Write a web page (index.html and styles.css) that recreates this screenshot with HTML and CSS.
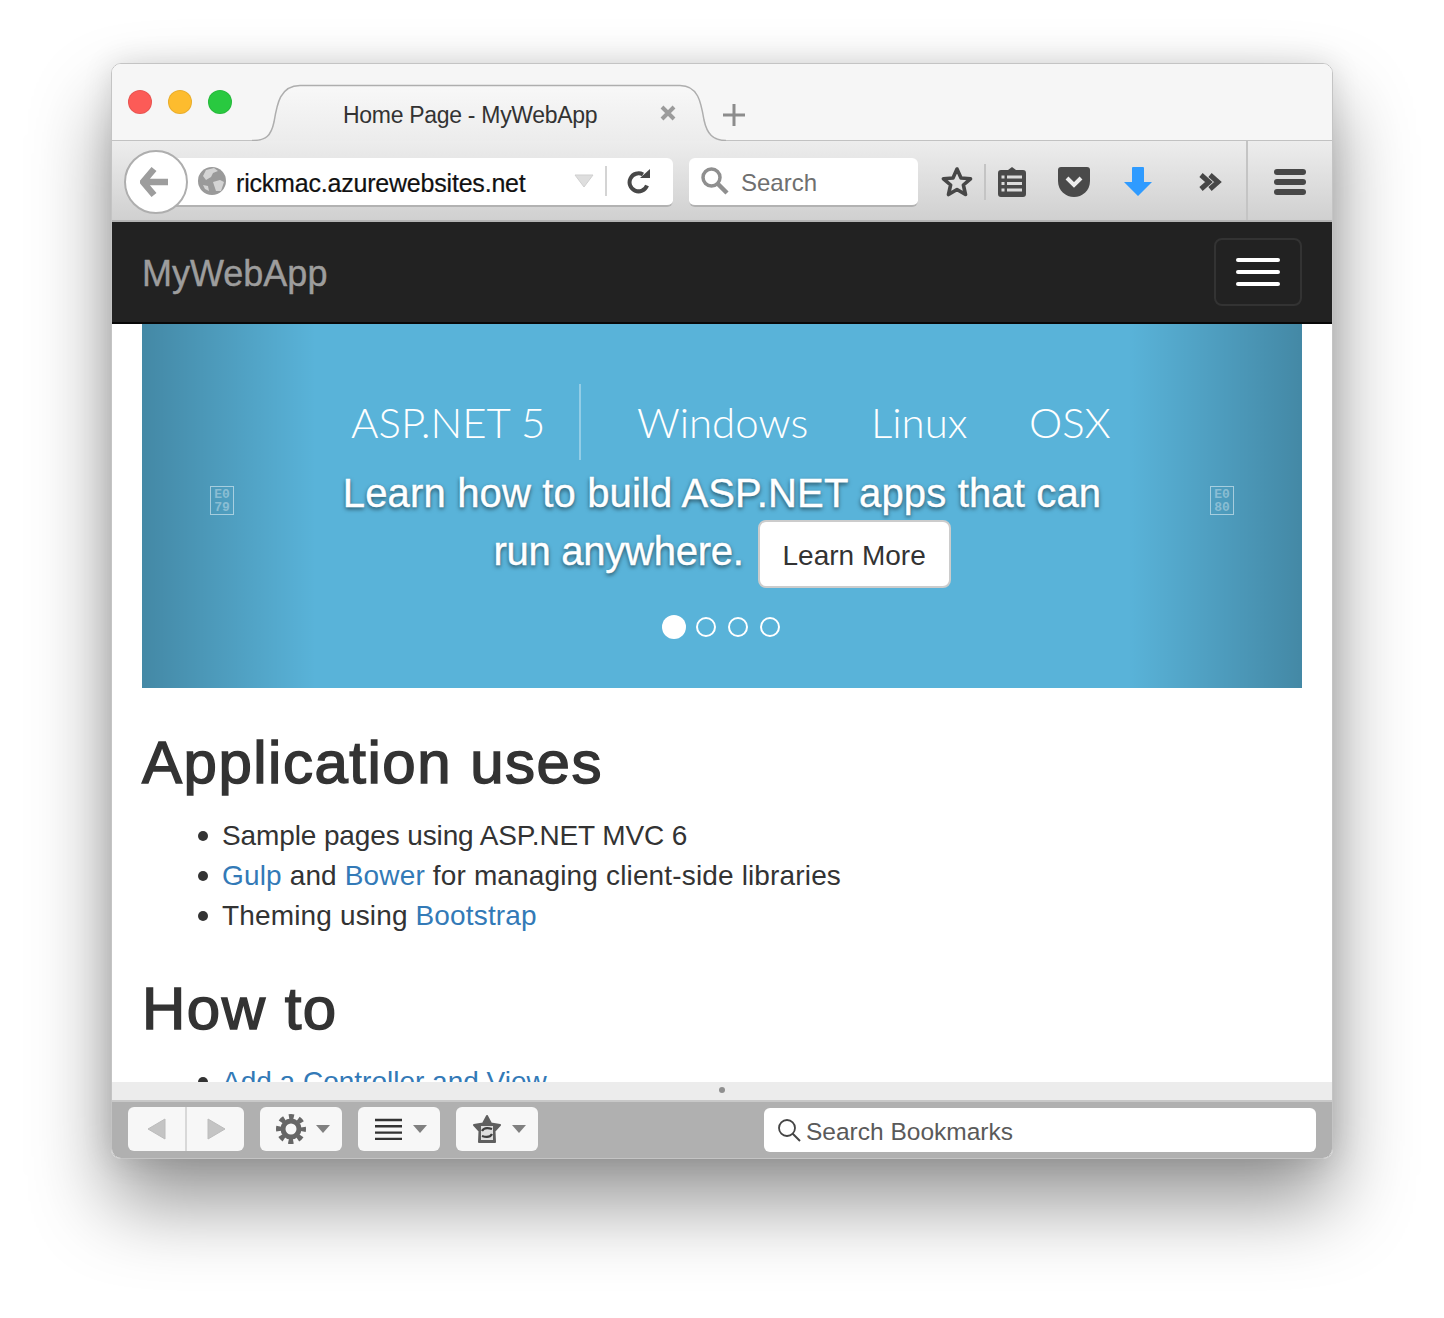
FILE: index.html
```html
<!DOCTYPE html>
<html lang="en">
<head>
    <meta charset="UTF-8">
    <title>Home Page - MyWebApp</title>
    <link rel="stylesheet" href="styles.css">
</head>
<body>
    <div class="window">
        <!-- title bar -->
        <div class="tabbar">
            <span class="light red"></span>
            <span class="light yellow"></span>
            <span class="light green"></span>
            <div class="tab">
                <svg class="tab-shape" width="474" height="57" viewBox="0 0 474 57">
                    <defs>
                        <linearGradient id="tabfill" x1="0" y1="0" x2="0" y2="1">
                            <stop offset="0" stop-color="#f8f8f8"/>
                            <stop offset="1" stop-color="#ececec"/>
                        </linearGradient>
                    </defs>
                    <path d="M0 56.5C14 56.5 19 52 22 38C25 20 28 1.5 48 1.5L428 1.5C446 1.5 449 18 452 36C455 50 461 56.5 474 56.5L474 57L0 57Z" fill="url(#tabfill)"/>
                    <path d="M0 56.5C14 56.5 19 52 22 38C25 20 28 1.5 48 1.5L428 1.5C446 1.5 449 18 452 36C455 50 461 56.5 474 56.5" fill="none" stroke="#aeaeae" stroke-width="1.5"/>
                </svg>
                <span class="tab-title">Home Page - MyWebApp</span>
                <svg class="tab-close" width="16" height="16" viewBox="0 0 16 16">
                    <path d="M2 2L14 14M14 2L2 14" stroke="#9b9b9b" stroke-width="4"/>
                </svg>
            </div>
            <svg class="new-tab" width="22" height="22" viewBox="0 0 22 22">
                <path d="M11 0V22M0 11H22" stroke="#8c8c8c" stroke-width="3"/>
            </svg>
        </div>

        <!-- browser toolbar -->
        <div class="toolbar">
            <div class="back">
                <svg width="30" height="32" viewBox="0 0 30 32">
                    <path d="M14 3L3 16L14 29M4 16H28" fill="none" stroke="#9d9d9d" stroke-width="6.5" stroke-linejoin="round"/>
                </svg>
            </div>
            <div class="urlbar">
                <svg class="globe" width="28" height="28" viewBox="0 0 28 28">
                    <circle cx="14" cy="14" r="14" fill="#9a9a9a"/>
                    <path d="M8 3L16 1L20 4L15 6L13 10L8 13L5 9ZM15 15L22 13L26 15L23 24L18 24ZM5 18L10 19L11 24L7 22Z" fill="#d4d4d4"/>
                </svg>
                <span class="url">rickmac.azurewebsites.net</span>
                <svg class="dropmarker" width="20" height="14" viewBox="0 0 20 14">
                    <path d="M1 1H19L10 13Z" fill="#dedede" stroke="#cfcfcf"/>
                </svg>
                <span class="url-sep"></span>
                <svg class="reload" width="26" height="26" viewBox="0 0 26 26">
                    <path d="M21 17.5A9 9 0 1 1 17 6.5" fill="none" stroke="#484848" stroke-width="4"/>
                    <path d="M14 10L24 10L24 1Z" fill="#484848"/>
                </svg>
            </div>
            <div class="searchbar">
                <svg width="28" height="28" viewBox="0 0 28 28">
                    <circle cx="10.5" cy="10.5" r="8.5" fill="none" stroke="#8f8f8f" stroke-width="3.5"/>
                    <path d="M16.5 16.5L26 26" stroke="#8f8f8f" stroke-width="4.5"/>
                </svg>
                <span class="search-label">Search</span>
            </div>
            <svg class="tool star" width="32" height="32" viewBox="0 0 32 32">
                <polygon points="16,3 20,12 29.5,12.8 22.4,19 24.5,28.5 16,23.5 7.5,28.5 9.6,19 2.5,12.8 12,12" fill="none" stroke="#474747" stroke-width="3.6" stroke-linejoin="round"/>
            </svg>
            <span class="tool-sep"></span>
            <svg class="tool clip" width="28" height="31" viewBox="0 0 28 31">
                <path d="M14 0L18 3H25A3 3 0 0 1 28 6V27A3 3 0 0 1 25 30H3A3 3 0 0 1 0 27V6A3 3 0 0 1 3 3H10Z" fill="#4a4a4a"/>
                <path d="M9 10H24M9 16.5H24M9 23H24" stroke="#dcdcdc" stroke-width="3"/>
                <path d="M3.5 10H6.5M3.5 16.5H6.5M3.5 23H6.5" stroke="#dcdcdc" stroke-width="3"/>
            </svg>
            <svg class="tool pocket" width="32" height="30" viewBox="0 0 32 30">
                <path d="M3 0H29A3 3 0 0 1 32 3V14C32 24 24 30 16 30S0 24 0 14V3A3 3 0 0 1 3 0Z" fill="#4a4a4a"/>
                <path d="M9 11L16 18L23 11" fill="none" stroke="#ececec" stroke-width="4"/>
            </svg>
            <svg class="tool arrow" width="30" height="30" viewBox="0 0 30 30">
                <path d="M9 1A1 1 0 0 1 10 0H20A1 1 0 0 1 21 1V15H29L15 29L1 15H9Z" fill="#2f9bff"/>
            </svg>
            <svg class="tool more" width="24" height="18" viewBox="0 0 24 18">
                <path d="M3 2L11 9L3 16M12 2L20 9L12 16" fill="none" stroke="#474747" stroke-width="5"/>
            </svg>
            <span class="tool-sep tall"></span>
            <div class="tool menu">
                <span></span>
                <span></span>
                <span></span>
            </div>
        </div>

        <!-- site navbar -->
        <div class="navbar">
            <a class="brand">MyWebApp</a>
            <div class="toggle">
                <span></span>
                <span></span>
                <span></span>
            </div>
        </div>

        <div class="page">
            <div class="carousel">
                <div class="control left"><div class="tofu">E0<br>79</div></div>
                <div class="control right"><div class="tofu">E0<br>80</div></div>
                <div class="banner">
                    <span class="b-main">ASP.NET 5</span>
                    <span class="b-line"></span>
                    <span class="b-win">Windows</span>
                    <span class="b-linux">Linux</span>
                    <span class="b-osx">OSX</span>
                </div>
                <div class="caption wide">Learn how to build ASP.NET apps that can</div>
                <div class="caption"><span class="run">run anywhere.</span><a class="learn">Learn More</a></div>
                <ol class="dots">
                    <li class="active"></li>
                    <li></li>
                    <li></li>
                    <li></li>
                </ol>
            </div>

            <h2 class="first">Application uses</h2>
            <ul>
                <li class="tight">Sample pages using ASP.NET MVC 6</li>
                <li><a>Gulp</a> and <a>Bower</a> for managing client-side libraries</li>
                <li>Theming using <a>Bootstrap</a></li>
            </ul>

            <h2>How to</h2>
            <ul>
                <li class="plain"><a>Add a Controller and View</a></li>
            </ul>
        </div>

        <div class="splitter"><span></span></div>

        <!-- bookmarks library bar -->
        <div class="footer">
            <div class="btn nav-btn">
                <span class="nav-half">
                    <svg width="20" height="22" viewBox="0 0 20 22"><path d="M18 1V21L1 11Z" fill="#c4c4c4" stroke="#bcbcbc"/></svg>
                </span>
                <span class="nav-half">
                    <svg width="20" height="22" viewBox="0 0 20 22"><path d="M2 1V21L19 11Z" fill="#c4c4c4" stroke="#bcbcbc"/></svg>
                </span>
            </div>
            <div class="btn">
                <svg width="30" height="30" viewBox="0 0 30 30">
                    <circle cx="15" cy="15" r="12.5" fill="none" stroke="#666" stroke-width="5" stroke-dasharray="5 4.82" stroke-dashoffset="2.5"/>
                    <circle cx="15" cy="15" r="8" fill="#f7f7f7" stroke="#666" stroke-width="5"/>
                </svg>
                <span class="caret"></span>
            </div>
            <div class="btn">
                <svg width="28" height="22" viewBox="0 0 28 22">
                    <path d="M0 2H27M0 8.3H27M0 14.6H27M0 20.9H27" stroke="#333" stroke-width="2.4"/>
                </svg>
                <span class="caret"></span>
            </div>
            <div class="btn">
                <svg width="30" height="30" viewBox="0 0 30 30">
                    <polygon points="15,2 19,9.5 28,11 22.5,17 23,28 7,28 7.5,17 2,11 11,9.5" fill="#5f5f5f" stroke="#5f5f5f" stroke-width="2" stroke-linejoin="round"/>
                    <rect x="9" y="12" width="12" height="14" fill="#dddddd"/>
                    <path d="M10 17C12 13 17 14 20 15M20 20C18 24 13 23 10 22" fill="none" stroke="#3c3c3c" stroke-width="2.2"/>
                </svg>
                <span class="caret"></span>
            </div>
            <div class="bm-search">
                <svg width="24" height="24" viewBox="0 0 24 24">
                    <circle cx="10" cy="10" r="8" fill="none" stroke="#444" stroke-width="1.8"/>
                    <path d="M15.5 15.5L23 23" stroke="#444" stroke-width="2"/>
                </svg>
                <span class="bm-label">Search Bookmarks</span>
            </div>
        </div>
    </div>
</body>
</html>
```

FILE: styles.css
```css
body {
    font-family: "Liberation Sans", Arial, sans-serif;
    background-color: #ffffff;
    color: #333333;
    margin: 0;
    padding: 63px 0 159px;
}

.window {
    width: 1220px;
    height: 1094px;
    margin: 0 auto;
    border: 1px solid #c4c4c4;
    border-radius: 10px;
    overflow: hidden;
    box-shadow: 0 44px 80px rgba(0, 0, 0, 0.42), 0 0 30px rgba(0, 0, 0, 0.12);
    display: flex;
    flex-direction: column;
}

/* title bar */
.tabbar {
    height: 76px;
    flex: none;
    display: flex;
    align-items: center;
    padding-left: 16px;
    background-color: #f6f6f6;
    border-bottom: 1px solid #c2c2c2;
}

.light {
    width: 24px;
    height: 24px;
    border-radius: 50%;
    margin-right: 16px;
    box-sizing: border-box;
    border: 1px solid rgba(0, 0, 0, 0.08);
}

.red { background-color: #fc5b57; }
.yellow { background-color: #fdbc2e; }
.green { background-color: #29c940; }

.tab {
    position: relative;
    width: 474px;
    height: 55px;
    padding-top: 2px;
    align-self: flex-end;
    margin: 0 0 -1px 4px;
    display: flex;
    align-items: center;
    font-size: 23px;
    color: #333333;
}

.tab-shape {
    position: absolute;
    left: 0;
    top: 0;
}

.tab-title {
    position: relative;
    margin-left: 91px;
    width: 317px;
    padding-top: 4px;
    white-space: nowrap;
    letter-spacing: -0.3px;
}

.tab-close {
    position: relative;
    margin-top: -2px;
}

.new-tab {
    margin: 26px 0 0 -3px;
}

/* browser toolbar */
.toolbar {
    height: 76px;
    padding-top: 3px;
    flex: none;
    display: flex;
    align-items: center;
    padding-left: 12px;
    background: linear-gradient(#ededed, #d0d0d0);
    border-bottom: 2px solid #b4b4b4;
}

.back {
    width: 58px;
    height: 60px;
    border: 2px solid #aeaeae;
    border-radius: 50%;
    background-color: #ffffff;
    position: relative;
    z-index: 1;
    display: flex;
    align-items: center;
    justify-content: center;
    margin-right: -18px;
    padding-right: 2px;
    box-sizing: content-box;
}

.urlbar,
.searchbar {
    height: 47px;
    background-color: #ffffff;
    border-bottom: 2px solid #b2b2b2;
    border-radius: 6px;
    display: flex;
    align-items: center;
    white-space: nowrap;
}

.urlbar {
    width: 503px;
    color: #111111;
    font-size: 25px;
    letter-spacing: -0.2px;
}

.globe {
    margin-left: 28px;
}

.url {
    margin-left: 10px;
    width: 338px;
    padding-top: 4px;
    -webkit-text-stroke: 0.2px #111111;
}

.url-sep {
    width: 2px;
    height: 30px;
    margin: 0 19px 0 11px;
    background-color: #d4d4d4;
}

.searchbar {
    width: 229px;
    margin-left: 16px;
    color: #6f6f6f;
    font-size: 24px;
}

.searchbar svg {
    margin: 0 12px 0 12px;
}

.search-label {
    padding-top: 4px;
}

.tool {
    flex: none;
}

.star { margin-left: 23px; }
.clip { margin-left: 12px; }
.pocket { margin-left: 32px; }
.arrow { margin-left: 33px; }
.more { margin-left: 45px; }
.menu { margin-left: 26px; }

.tool-sep {
    width: 2px;
    height: 36px;
    margin-left: 11px;
    background-color: #c4c4c4;
}

.tool-sep.tall {
    height: 79px;
    margin-top: -3px;
    margin-left: 24px;
}

.menu {
    width: 32px;
    display: flex;
    flex-direction: column;
    gap: 4px;
}

.menu span {
    height: 6px;
    border-radius: 3px;
    background-color: #474747;
}

/* site navbar */
.navbar {
    height: 100px;
    flex: none;
    display: flex;
    align-items: center;
    justify-content: space-between;
    padding: 0 30px;
    background-color: #222222;
    border-bottom: 2px solid #080808;
}

.brand {
    font-size: 36px;
    color: #9d9d9d;
    padding-top: 4px;
    -webkit-text-stroke: 0.4px #9d9d9d;
}

.toggle {
    width: 84px;
    height: 64px;
    border: 2px solid #333333;
    border-radius: 8px;
    display: flex;
    flex-direction: column;
    align-items: center;
    justify-content: center;
    gap: 8px;
}

.toggle span {
    width: 44px;
    height: 4px;
    border-radius: 2px;
    background-color: #ffffff;
}

/* page content */
.page {
    flex: 1;
    min-height: 0;
    overflow: hidden;
    padding: 0 30px;
    background-color: #ffffff;
    font-size: 28px;
    line-height: 40px;
    letter-spacing: 0.15px;
}

.carousel {
    position: relative;
    height: 304px;
    padding-top: 60px;
    background-color: #59b3d9;
    color: #ffffff;
    letter-spacing: 0;
}

.control {
    position: absolute;
    top: 0;
    bottom: 0;
    width: 174px;
    box-sizing: border-box;
    padding-top: 162px;
}

.control.left {
    left: 0;
    padding-left: 68px;
    background: linear-gradient(to right, rgba(0, 0, 0, 0.24), rgba(0, 0, 0, 0));
}

.control.right {
    right: 0;
    padding-left: 82px;
    background: linear-gradient(to right, rgba(0, 0, 0, 0), rgba(0, 0, 0, 0.24));
}

.tofu {
    width: 22px;
    height: 26px;
    padding-top: 1px;
    border: 1px solid rgba(255, 255, 255, 0.5);
    font-family: "Liberation Mono", monospace;
    font-size: 13px;
    font-weight: bold;
    line-height: 13px;
    text-align: center;
    color: rgba(255, 255, 255, 0.35);
}

.banner {
    position: relative;
    height: 76px;
    display: flex;
    align-items: center;
    padding-left: 209px;
    margin-bottom: 4px;
    font-family: Lato, sans-serif;
    font-weight: 300;
    font-size: 42px;
    line-height: 78px;
    white-space: nowrap;
}

.b-main {
    width: 191px;
}

.b-line {
    width: 2px;
    height: 76px;
    margin-left: 37px;
    background-color: rgba(255, 255, 255, 0.35);
}

.b-win { margin-left: 56px; width: 168px; }
.b-linux { margin-left: 66px; width: 95px; }
.b-osx { margin-left: 63px; }

.caption {
    position: relative;
    height: 58px;
    display: flex;
    align-items: center;
    justify-content: center;
    font-size: 40px;
    line-height: 58px;
    white-space: nowrap;
    text-shadow: 0 2px 4px rgba(0, 0, 0, 0.6);
    -webkit-text-stroke: 0.4px #ffffff;
}

.caption.wide {
    letter-spacing: 0.15px;
}

.run {
    letter-spacing: -0.25px;
}

.learn {
    flex: none;
    width: 189px;
    height: 64px;
    margin: 6px 0 0 14px;
    border: 2px solid #cccccc;
    border-radius: 8px;
    background-color: #ffffff;
    font-size: 28px;
    line-height: 68px;
    text-align: center;
    text-shadow: none;
    -webkit-text-stroke: 0;
}

.dots {
    position: relative;
    display: flex;
    justify-content: center;
    list-style: none;
    padding: 0;
    margin: 35px 0 0;
    height: 24px;
    align-items: center;
}

.dots li {
    width: 16px;
    height: 16px;
    margin: 0 6px;
    border: 2px solid #ffffff;
    border-radius: 50%;
}

.dots li.active {
    width: 24px;
    height: 24px;
    margin: 0 4px;
    border: none;
    background-color: #ffffff;
}

h2 {
    margin: 40px 0 20px;
    font-size: 60px;
    font-weight: 400;
    line-height: 66px;
    letter-spacing: 1.5px;
    -webkit-text-stroke: 1.5px #333333;
}

h2.first {
    margin-top: 42px;
}

.page ul {
    margin: 0 0 20px;
    padding-left: 80px;
    list-style: none;
}

.page ul li {
    position: relative;
}

.page ul li::before {
    content: "";
    position: absolute;
    left: -24px;
    top: 15px;
    width: 10px;
    height: 10px;
    border-radius: 50%;
    background-color: #333333;
}

.page ul li.tight {
    letter-spacing: -0.12px;
}

.page ul li.plain {
    letter-spacing: 0;
}

.page a {
    color: #337ab7;
}

.page a.learn {
    color: #333333;
}

.splitter {
    height: 18px;
    flex: none;
    display: flex;
    align-items: center;
    justify-content: center;
    background-color: #ececec;
}

.splitter span {
    width: 6px;
    height: 6px;
    margin-top: -2px;
    border-radius: 50%;
    background-color: #8f8f8f;
}

/* bookmarks library bar */
.footer {
    height: 51px;
    flex: none;
    display: flex;
    align-items: flex-start;
    gap: 16px;
    padding: 5px 16px 0;
    background-color: #b0b0b0;
    border-top: 2px solid #c8c8c8;
}

.btn {
    width: 82px;
    height: 44px;
    box-sizing: border-box;
    padding-left: 4px;
    border-radius: 6px;
    background-color: #f7f7f7;
    display: flex;
    align-items: center;
    justify-content: center;
    gap: 10px;
}

.nav-btn {
    width: 116px;
    gap: 0;
    padding-left: 0;
}

.nav-half {
    flex: 1;
    height: 44px;
    display: flex;
    align-items: center;
    justify-content: center;
}

.nav-half:first-child {
    border-right: 2px solid #d8d8d8;
}

.caret {
    width: 0;
    height: 0;
    border-left: 7px solid transparent;
    border-right: 7px solid transparent;
    border-top: 8px solid #808080;
}

.bm-search {
    margin: 1px 0 0 auto;
    width: 552px;
    height: 44px;
    box-sizing: border-box;
    padding-left: 13px;
    border-radius: 6px;
    background-color: #ffffff;
    display: flex;
    align-items: center;
    gap: 5px;
    font-size: 24.5px;
    color: #5a5a5a;
}

.bm-label {
    padding-top: 4px;
}
```
